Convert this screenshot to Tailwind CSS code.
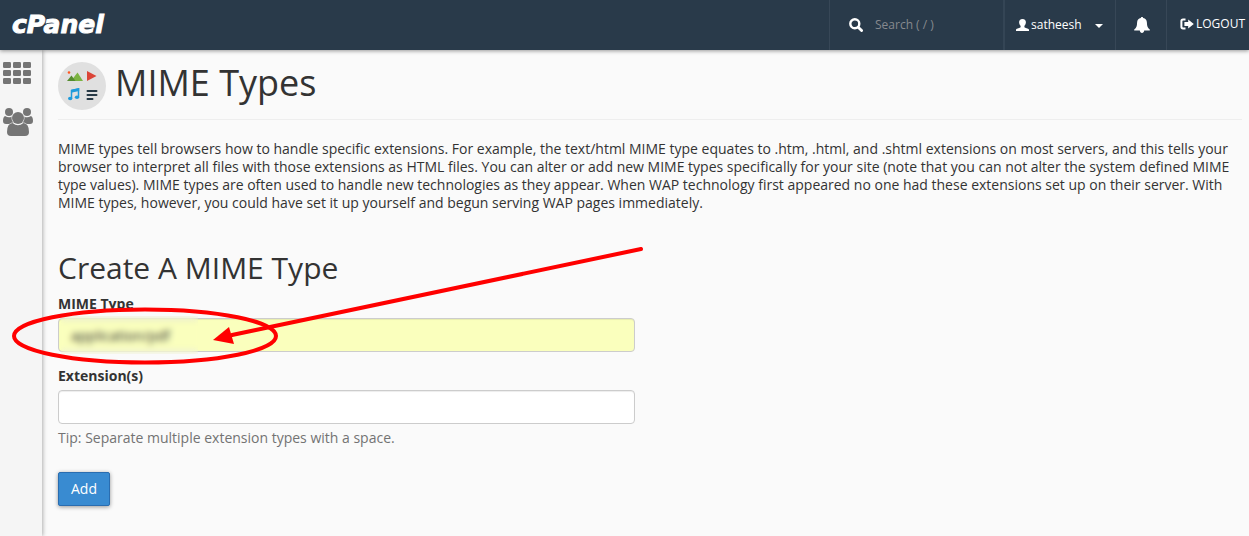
<!DOCTYPE html>
<html lang="en">
<head>
    <meta charset="UTF-8">
    <meta name="viewport" content="width=device-width, initial-scale=1.0">
    <title>cPanel - MIME Types</title>

    <!-- Tailwind CSS -->
    <script src="https://cdn.jsdelivr.net/npm/@tailwindcss/browser@4"></script>
</head>
<body class="min-h-screen flex flex-col bg-[#fafafa] text-[#333] text-sm leading-[18px] font-['Open_Sans',sans-serif]">

    <!-- Top bar -->
    <header class="relative z-10 flex h-[50px] shrink-0 items-stretch bg-[#293a4a] text-xs text-white shadow-[0_1px_4px_rgba(0,0,0,0.4)]">
        <a href="#" class="flex items-center pl-3 font-['DejaVu_Sans',sans-serif] text-[25px] font-bold italic [-webkit-text-stroke:1px_#fff]">cPanel</a>

        <div class="ml-auto flex">
            <label for="quickJump" class="flex w-[174px] items-center border-l border-[#374757] pl-[19px]">
                <svg role="img" aria-label="Search" class="size-[14px] shrink-0" viewBox="0 0 14 14" fill="none" stroke="currentColor">
                    <circle cx="5.8" cy="5.8" r="4.5" stroke-width="2.4"/>
                    <path d="M9.2 9.2L12.6 12.6" stroke-width="2.8" stroke-linecap="round"/>
                </svg>
                <input type="search" id="quickJump" placeholder="Search ( / )" class="ml-3 w-full min-w-0 bg-transparent outline-none placeholder:text-[#86898e]">
            </label>
            <button type="button" class="flex w-[112px] items-center border-l-2 border-[#344555] pl-[11px]">
                <svg class="h-3 w-[13px]" viewBox="0 0 13 12" fill="currentColor">
                    <path d="M6.5 0C8.8 0 9.9 1.3 9.9 3.2C9.9 4.8 9.2 6 8.4 6.8V8.2C9 9 12.2 9 13 10.6V12H0V10.6C.8 9 4 9 4.6 8.2V6.8C3.8 6 3.1 4.8 3.1 3.2C3.1 1.3 4.2 0 6.5 0Z"/>
                </svg>
                <span class="ml-[2px]">satheesh</span>
                <svg class="ml-[13px] mt-[2px] h-1 w-2" viewBox="0 0 8 4" fill="currentColor"><path d="M0 0H8L4 4Z"/></svg>
            </button>
            <button type="button" aria-label="Notifications" class="flex w-[51px] items-center justify-center border-l border-[#374757] pl-[2px]">
                <svg class="h-4 w-4" viewBox="0 0 16 16" fill="currentColor">
                    <path d="M8 0C8.8 0 9.2.5 9.1 1.1C11.6 1.6 12.8 3.2 12.9 5.4C13 9 13.6 10.8 15.8 12.4V13.6H.2V12.4C2.4 10.8 3 9 3.1 5.4C3.2 3.2 4.4 1.6 6.9 1.1C6.8.5 7.2 0 8 0ZM5.8 13.6H10.2C10.1 15.2 9.1 16 8 16C6.9 16 5.9 15.2 5.8 13.6Z"/>
                </svg>
            </button>
            <a href="#" class="flex w-[83px] items-center border-l border-[#374757] pb-[2px] pl-[13px]">
                <svg class="mr-[2px] h-3 w-[14px]" viewBox="0 0 14 12" fill="currentColor">
                    <path d="M5.5 .5H3C1.3.5.4 1.4.4 3V9C.4 10.6 1.3 11.5 3 11.5H5.5V9.6H3.4C2.7 9.6 2.4 9.3 2.4 8.6V3.4C2.4 2.7 2.7 2.4 3.4 2.4H5.5Z"/>
                    <path d="M8.2 1.4L13.8 6L8.2 10.6V7.9H4.4V4.1H8.2Z"/>
                </svg>
                LOGOUT
            </a>
        </div>
    </header>

    <div class="flex flex-1">
        <!-- Side menu -->
        <nav class="flex w-[42px] shrink-0 flex-col gap-6 bg-[#f5f5f5] pl-[3px] pt-3 text-[#757575] shadow-[1px_0_4px_rgba(0,0,0,0.3)]">
            <a href="#" aria-label="Home">
                <svg class="block h-[22px] w-7" viewBox="0 0 28 22" fill="currentColor">
                    <rect width="8" height="6" rx="1.3"/><rect x="10" width="8" height="6" rx="1.3"/><rect x="20" width="8" height="6" rx="1.3"/>
                    <rect y="8" width="8" height="6" rx="1.3"/><rect x="10" y="8" width="8" height="6" rx="1.3"/><rect x="20" y="8" width="8" height="6" rx="1.3"/>
                    <rect y="16" width="8" height="6" rx="1.3"/><rect x="10" y="16" width="8" height="6" rx="1.3"/><rect x="20" y="16" width="8" height="6" rx="1.3"/>
                </svg>
            </a>
            <a href="#" aria-label="User Manager">
                <svg class="block h-7 w-[30px]" viewBox="0 0 30 28" fill="currentColor">
                    <circle cx="6" cy="4" r="4"/>
                    <circle cx="24" cy="4" r="4"/>
                    <path d="M2 8Q6 10.5 8.6 8.4Q8.2 12.6 10.6 14.6Q8 14.6 6.2 16H3Q0 16 0 13Q0 9 2 8Z"/>
                    <path d="M28 8Q24 10.5 21.4 8.4Q21.8 12.6 19.4 14.6Q22 14.6 23.8 16H27Q30 16 30 13Q30 9 28 8Z"/>
                    <circle cx="15" cy="10" r="6"/>
                    <path d="M9.6 15Q15 19.6 20.4 15Q26 15.5 26 24Q26 28 22 28H8Q4 28 4 24Q4 15.5 9.6 15Z"/>
                </svg>
            </a>
        </nav>

        <!-- Page content -->
        <main class="min-w-0 flex-1 pb-6 pl-4 pr-[7px] pt-3">
            <div class="flex border-b border-[#eee] pb-[9px]">
                <svg class="size-12 shrink-0" viewBox="0 0 48 48">
                    <circle cx="24" cy="24" r="24" fill="#e0e0e0"/>
                    <circle cx="11" cy="10.5" r="1.3" fill="#ff5722"/>
                    <path d="M13 19L19.5 10.5L25 19Z" fill="#7cb342"/>
                    <path d="M9 19L13.5 13.5L17.5 19Z" fill="#558b2f"/>
                    <path d="M29 9L38.5 14L29 19Z" fill="#db4437"/>
                    <path d="M13.5 36V28.5L20.5 27V35" fill="none" stroke="#1e9bdc" stroke-width="1.5"/>
                    <path d="M13 27.7L21.2 26V29L13 30.7Z" fill="#1e9bdc"/>
                    <ellipse cx="12.2" cy="36.5" rx="2.2" ry="1.8" fill="#1e9bdc"/>
                    <ellipse cx="19" cy="35.2" rx="2.2" ry="1.8" fill="#1e9bdc"/>
                    <path d="M29.5 29H38.5M29.5 33H38.5M29.5 37H34.5" stroke="#263845" stroke-width="2" stroke-linecap="round"/>
                </svg>
                <h1 class="ml-[9px] text-4xl leading-[42px]">MIME Types</h1>
            </div>

            <p class="mt-5">MIME types tell browsers how to handle specific extensions. For example, the text/html MIME type equates to .htm, .html, and .shtml extensions on most servers, and this tells your browser to interpret all files with those extensions as HTML files. You can alter or add new MIME types specifically for your site (note that you can not alter the system defined MIME type values). MIME types are often used to handle new technologies as they appear. When WAP technology first appeared no one had these extensions set up on their server. With MIME types, however, you could have set it up yourself and begun serving WAP pages immediately.</p>

            <h2 class="mt-10 text-3xl leading-8">Create A MIME Type</h2>

            <form class="mt-[11px] max-w-[577px]">
                <label for="mimeType" class="block font-bold">MIME Type</label>
                <div class="relative mt-[5px]">
                    <input type="text" id="mimeType" value="application/pdf" class="block h-[34px] w-full rounded border border-[#ccc] bg-[#faffbd] px-3 shadow-[inset_0_1px_1px_rgba(0,0,0,0.075)]">
                    <!-- hides the entered value -->
                    <div class="pointer-events-none absolute -inset-y-[2px] left-[3px] w-[137px] backdrop-blur-[3px]"></div>
                    <!-- red marker and arrow -->
                    <svg class="pointer-events-none absolute left-0 top-0 h-[34px] w-[577px] overflow-visible" viewBox="0 0 577 34">
                        <ellipse cx="87" cy="18" rx="131" ry="26.5" fill="none" stroke="#f00" stroke-width="4"/>
                        <path d="M583 -69L174 17" stroke="#f00" stroke-width="4" stroke-linecap="round"/>
                        <path d="M155 22L171 9L176 26Z" fill="#f00"/>
                    </svg>
                </div>

                <label for="extensions" class="mt-[15px] block font-bold">Extension(s)</label>
                <input type="text" id="extensions" aria-describedby="extensionsTip" class="mt-[5px] block h-[34px] w-full rounded border border-[#ccc] bg-white px-3 shadow-[inset_0_1px_1px_rgba(0,0,0,0.075)]">
                <p id="extensionsTip" class="mt-[5px] text-[#737373]">Tip: Separate multiple extension types with a space.</p>

                <button type="submit" class="mt-[25px] h-[34px] rounded-xs border border-[#2a6db0] bg-[#398bd1] px-3 text-white shadow-[0_1px_4px_rgba(0,0,0,0.4)]">Add</button>
            </form>
        </main>
    </div>

</body>
</html>
